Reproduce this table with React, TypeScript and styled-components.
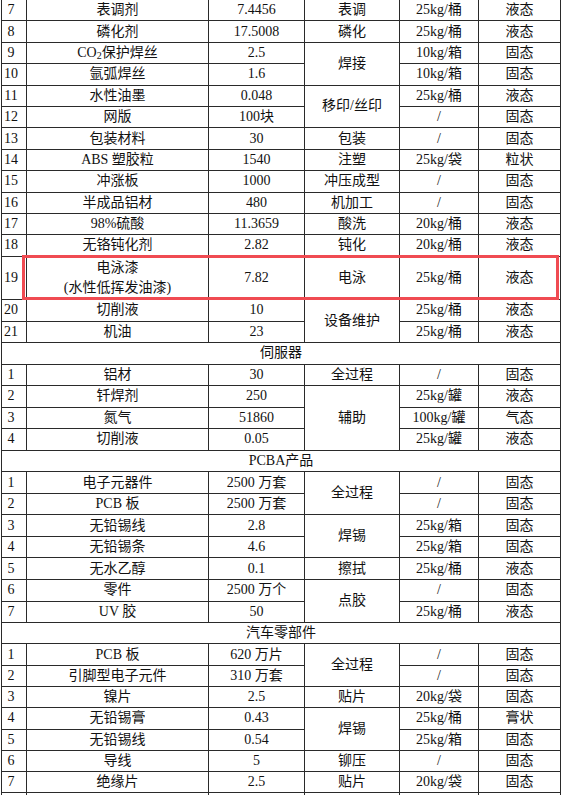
import React from 'react'
import styled, { createGlobalStyle } from 'styled-components'

const GlobalStyle = createGlobalStyle`
  html, body {
    margin: 0;
    padding: 0;
    background: #fff;
  }
  body {
    font-family: "Liberation Serif", "Noto Sans CJK SC", serif;
    color: #111;
    overflow: hidden;
  }
`

type Row = {
  no: string
  name: React.ReactNode
  amount: string
  process?: string
  span?: number
  pack: string
  state: string
  tall?: boolean
}

type Section = {
  title?: string
  rowHeight: number
  rows: Row[]
}

const sections: Section[] = [
  {
    rowHeight: 21.4,
    rows: [
      { no: '7', name: '表调剂', amount: '7.4456', process: '表调', pack: '25kg/桶', state: '液态' },
      { no: '8', name: '磷化剂', amount: '17.5008', process: '磷化', pack: '25kg/桶', state: '液态' },
      {
        no: '9',
        name: (
          <>
            CO<sub>2</sub>保护焊丝
          </>
        ),
        amount: '2.5',
        process: '焊接',
        span: 2,
        pack: '10kg/箱',
        state: '固态',
      },
      { no: '10', name: '氩弧焊丝', amount: '1.6', pack: '10kg/箱', state: '固态' },
      { no: '11', name: '水性油墨', amount: '0.048', process: '移印/丝印', span: 2, pack: '25kg/桶', state: '液态' },
      { no: '12', name: '网版', amount: '100块', pack: '/', state: '固态' },
      { no: '13', name: '包装材料', amount: '30', process: '包装', pack: '/', state: '固态' },
      { no: '14', name: 'ABS 塑胶粒', amount: '1540', process: '注塑', pack: '25kg/袋', state: '粒状' },
      { no: '15', name: '冲涨板', amount: '1000', process: '冲压成型', pack: '/', state: '固态' },
      { no: '16', name: '半成品铝材', amount: '480', process: '机加工', pack: '/', state: '固态' },
      { no: '17', name: '98%硫酸', amount: '11.3659', process: '酸洗', pack: '20kg/桶', state: '液态' },
      { no: '18', name: '无铬钝化剂', amount: '2.82', process: '钝化', pack: '20kg/桶', state: '液态' },
      {
        no: '19',
        name: (
          <>
            电泳漆
            <br />
            (水性低挥发油漆)
          </>
        ),
        amount: '7.82',
        process: '电泳',
        pack: '25kg/桶',
        state: '液态',
        tall: true,
      },
      { no: '20', name: '切削液', amount: '10', process: '设备维护', span: 2, pack: '25kg/桶', state: '液态' },
      { no: '21', name: '机油', amount: '23', pack: '25kg/桶', state: '液态' },
    ],
  },
  {
    title: '伺服器',
    rowHeight: 21.55,
    rows: [
      { no: '1', name: '铝材', amount: '30', process: '全过程', pack: '/', state: '固态' },
      { no: '2', name: '钎焊剂', amount: '250', process: '辅助', span: 3, pack: '25kg/罐', state: '液态' },
      { no: '3', name: '氮气', amount: '51860', pack: '100kg/罐', state: '气态' },
      { no: '4', name: '切削液', amount: '0.05', pack: '25kg/罐', state: '液态' },
    ],
  },
  {
    title: 'PCBA产品',
    rowHeight: 21.55,
    rows: [
      { no: '1', name: '电子元器件', amount: '2500 万套', process: '全过程', span: 2, pack: '/', state: '固态' },
      { no: '2', name: 'PCB 板', amount: '2500 万套', pack: '/', state: '固态' },
      { no: '3', name: '无铅锡线', amount: '2.8', process: '焊锡', span: 2, pack: '25kg/箱', state: '固态' },
      { no: '4', name: '无铅锡条', amount: '4.6', pack: '25kg/箱', state: '固态' },
      { no: '5', name: '无水乙醇', amount: '0.1', process: '擦拭', pack: '25kg/桶', state: '液态' },
      { no: '6', name: '零件', amount: '2500 万个', process: '点胶', span: 2, pack: '/', state: '固态' },
      { no: '7', name: 'UV 胶', amount: '50', pack: '25kg/桶', state: '液态' },
    ],
  },
  {
    title: '汽车零部件',
    rowHeight: 21.3,
    rows: [
      { no: '1', name: 'PCB 板', amount: '620 万片', process: '全过程', span: 2, pack: '/', state: '固态' },
      { no: '2', name: '引脚型电子元件', amount: '310 万套', pack: '/', state: '固态' },
      { no: '3', name: '镍片', amount: '2.5', process: '贴片', pack: '20kg/袋', state: '固态' },
      { no: '4', name: '无铅锡膏', amount: '0.43', process: '焊锡', span: 2, pack: '25kg/桶', state: '膏状' },
      { no: '5', name: '无铅锡线', amount: '0.54', pack: '25kg/箱', state: '固态' },
      { no: '6', name: '导线', amount: '5', process: '铆压', pack: '/', state: '固态' },
      { no: '7', name: '绝缘片', amount: '2.5', process: '贴片', pack: '20kg/袋', state: '固态' },
      { no: '', name: '', amount: '', process: '', pack: '', state: '' },
    ],
  },
]

const Page = styled.div`
  position: relative;
  padding-left: 1px;
  margin-top: -1px;
`

const Sheet = styled.table`
  width: 559px;
  border-collapse: collapse;
  table-layout: fixed;
  font-size: 14px;
  line-height: 20px;
`

const BodyRow = styled.tr<{ $h: number; $tall?: boolean }>`
  height: ${p => (p.$tall ? '43.5px' : `${p.$h}px`)};
`

const Cell = styled.td`
  border: 1px solid #2a2a2a;
  padding: 0 2px;
  text-align: center;
  vertical-align: middle;
  white-space: nowrap;
  overflow: hidden;

  sub {
    font-size: 10px;
    line-height: 0;
    vertical-align: -2px;
  }
`

const NoCell = styled(Cell)`
  padding: 0 6px 0 0;
`

const TitleCell = styled(Cell)`
  padding: 0;
`

const Highlight = styled.div`
  position: absolute;
  left: 22px;
  top: 256px;
  width: 537px;
  height: 45px;
  box-sizing: border-box;
  border: 3px solid #f04b52;
  pointer-events: none;
`

export default function App() {
  return (
    <Page>
      <GlobalStyle />
      <Sheet>
        <colgroup>
          <col style={{ width: 25 }} />
          <col style={{ width: 182 }} />
          <col style={{ width: 96 }} />
          <col style={{ width: 95 }} />
          <col style={{ width: 79 }} />
          <col style={{ width: 82 }} />
        </colgroup>
        <tbody>
          {sections.map((section, si) => (
            <React.Fragment key={si}>
              {section.title && (
                <BodyRow $h={section.rowHeight}>
                  <TitleCell colSpan={6}>{section.title}</TitleCell>
                </BodyRow>
              )}
              {section.rows.map((row, ri) => (
                <BodyRow key={ri} $h={section.rowHeight} $tall={row.tall}>
                  <NoCell>{row.no}</NoCell>
                  <Cell>{row.name}</Cell>
                  <Cell>{row.amount}</Cell>
                  {row.process !== undefined && <Cell rowSpan={row.span || 1}>{row.process}</Cell>}
                  <Cell>{row.pack}</Cell>
                  <Cell>{row.state}</Cell>
                </BodyRow>
              ))}
            </React.Fragment>
          ))}
        </tbody>
      </Sheet>
      <Highlight />
    </Page>
  )
}
